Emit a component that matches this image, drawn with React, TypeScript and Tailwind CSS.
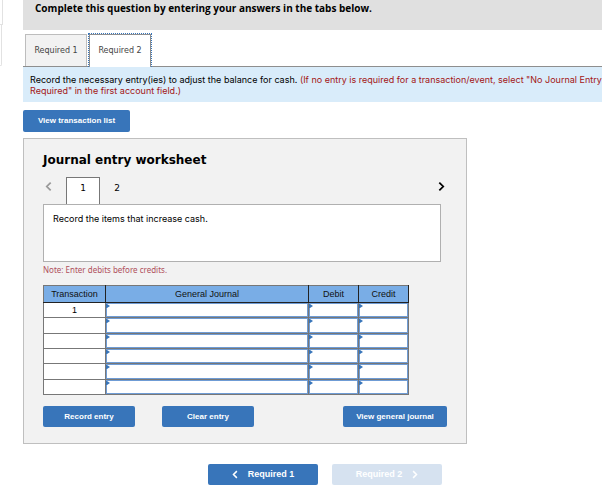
import { useState } from 'react';

const journalRows = [
  { id: 1, transaction: '1', height: 'h-[14px]' },
  { id: 2, transaction: '', height: 'h-[15px]' },
  { id: 3, transaction: '', height: 'h-[14px]' },
  { id: 4, transaction: '', height: 'h-[14px]' },
  { id: 5, transaction: '', height: 'h-[15px]' },
  { id: 6, transaction: '', height: 'h-[14px]' },
];

const fields = ['General Journal', 'Debit', 'Credit'];

const buttonClass =
  'rounded-[2px] bg-[#3875ba] text-center font-["Liberation_Sans",Arial,sans-serif] font-bold text-white';

function Chevron({ direction, className }: { direction: 'left' | 'right'; className: string }) {
  return (
    <svg viewBox="0 0 8 12" fill="none" stroke="currentColor" className={className} aria-hidden="true">
      <path d={direction === 'left' ? 'M6.5 1.5 2 6l4.5 4.5' : 'M1.5 1.5 6 6l-4.5 4.5'} strokeWidth="2" />
    </svg>
  );
}

function RequirementTabs() {
  return (
    <div role="tablist" className="flex h-[33px] items-end gap-px border-b border-[#8e8e8e] pl-[2px] font-['DejaVu_Sans',Verdana,sans-serif] text-[8px] text-[#444]">
      <button role="tab" aria-selected="false" className="h-8 w-[62px] border border-b-0 border-[#bdbdbd] bg-[#f2f2f2]">
        Required 1
      </button>
      <button role="tab" aria-selected="true" className="-mb-px h-[34px] w-16 border border-b-0 border-dotted border-[#3875ba] bg-white">
        <span className="flex h-full items-center justify-center border border-b-0 border-[#8e8e8e]">
          Required 2
        </span>
      </button>
    </div>
  );
}

function JournalTable() {
  return (
    <table className="w-full max-w-[366px] table-fixed border-collapse bg-white font-['Liberation_Sans',Arial,sans-serif] text-[9px] leading-3">
      <colgroup>
        <col className="w-[62px]" />
        <col />
        <col className="w-[50px]" />
        <col className="w-[50px]" />
      </colgroup>
      <thead>
        <tr className="h-[17px] bg-[#79ade6] text-[#111]">
          {['Transaction', ...fields].map((heading) => (
            <th key={heading} className="border border-[#222] border-t-[#777] p-0 font-normal first:border-l-[#777]">
              {heading}
            </th>
          ))}
        </tr>
      </thead>
      <tbody>
        {journalRows.map((row) => (
          <tr key={row.id}>
            <td className="border border-[#777] p-0 text-center">{row.transaction}</td>
            {fields.map((field) => (
              <td key={field} className="relative border border-[#777] p-0">
                <input
                  aria-label={`${field}, line ${row.id}`}
                  className={`block w-full border border-[#6f9cd5] bg-white px-1 outline-none ${row.height}`}
                />
                <svg viewBox="0 0 4 4" className="pointer-events-none absolute top-px left-0 size-1" aria-hidden="true">
                  <path d="M0 0h1l3 2-3 2H0z" fill="#3875ba" />
                </svg>
              </td>
            ))}
          </tr>
        ))}
      </tbody>
    </table>
  );
}

function Worksheet() {
  const [entry, setEntry] = useState(1);

  return (
    <section className="w-full max-w-[444px] border border-[#bfbfbf] bg-[#f2f2f2] px-[19px] pt-3 pb-4">
      <h2 className="font-['DejaVu_Sans',Verdana,sans-serif] text-[12px] leading-[18px] font-bold text-black">
        Journal entry worksheet
      </h2>

      {/* Entry pager */}
      <div className="mt-2 flex h-[27px] items-start font-['DejaVu_Sans',Verdana,sans-serif] text-[9px]">
        <button aria-label="Previous entry" className="mt-1 w-[23px] pl-[2px] text-[#999]" onClick={() => setEntry(1)}>
          <Chevron direction="left" className="h-[11px] w-[7px]" />
        </button>
        {[1, 2].map((number) => (
          <button
            key={number}
            onClick={() => setEntry(number)}
            className={
              entry === number
                ? 'h-[27px] w-[34px] border border-b-0 border-[#777] bg-white pb-1'
                : 'h-[27px] w-[34px] pb-1'
            }
          >
            {number}
          </button>
        ))}
        <button aria-label="Next entry" className="mt-1 mr-[2px] ml-auto text-black" onClick={() => setEntry(2)}>
          <Chevron direction="right" className="h-[11px] w-[7px]" />
        </button>
      </div>

      <p className="mr-[6px] h-[58px] border border-[#b0b0b0] bg-white px-[9px] py-2 text-[9px] leading-3 text-black">
        Record the items that increase cash.
      </p>
      <p className="mt-[3px] mb-[10px] font-['Noto_Sans',sans-serif] text-[8px] leading-[10px] text-[#b0505c]">
        Note: Enter debits before credits.
      </p>

      <JournalTable />

      <div className="mt-[11px] flex h-[21px] text-[8px]">
        <button className={`${buttonClass} w-[92px]`}>Record entry</button>
        <button className={`${buttonClass} ml-[27px] w-[92px]`}>Clear entry</button>
        <button className={`${buttonClass} ml-auto w-[104px]`}>View general journal</button>
      </div>
    </section>
  );
}

export default function App() {
  return (
    <div className="flex overflow-hidden bg-white font-['Inter',Verdana,sans-serif] text-black">
      <aside className="w-[23px] shrink-0">
        <div className="h-[25px] w-[3px] border-r border-b border-[#e2e2e2]" />
        <div className="h-[41px] w-[2px] rounded-br-[2px] border-r border-b border-[#e2e2e2]" />
      </aside>

      <main className="min-w-0 flex-1">
        <header className="h-[30px] bg-[#e0e0e0] pt-[2px] pl-3">
          <h1 className="font-['Open_Sans',sans-serif] text-[10px] leading-3 font-bold whitespace-nowrap">
            Complete this question by entering your answers in the tabs below.
          </h1>
        </header>

        <div className="pt-1">
          <RequirementTabs />
          <p className="h-[35px] overflow-hidden bg-[#d9ecfa] px-[7px] pt-[7px] text-[9px] leading-[11px] whitespace-nowrap">
            Record the necessary entry(ies) to adjust the balance for cash.{' '}
            <span className="text-[#a31515]">
              (If no entry is required for a transaction/event, select "No Journal Entry
              <br />
              Required" in the first account field.)
            </span>
          </p>
        </div>

        <button className={`${buttonClass} mt-2 mb-[6px] block h-[22px] w-[107px] text-[8px]`}>
          View transaction list
        </button>

        <Worksheet />

        <nav aria-label="Requirements" className="mt-5 flex w-full max-w-[419px] justify-end gap-[14px] text-[9px]">
          <button className={`${buttonClass} flex h-[21px] w-[110px] items-center justify-center gap-[10px]`}>
            <Chevron direction="left" className="h-[9px] w-[6px]" />
            Required 1
          </button>
          <button
            disabled
            className={`${buttonClass} flex h-[21px] w-[110px] items-center justify-center gap-[10px] opacity-20`}
          >
            Required 2
            <Chevron direction="right" className="h-[9px] w-[6px]" />
          </button>
        </nav>
      </main>
    </div>
  );
}
